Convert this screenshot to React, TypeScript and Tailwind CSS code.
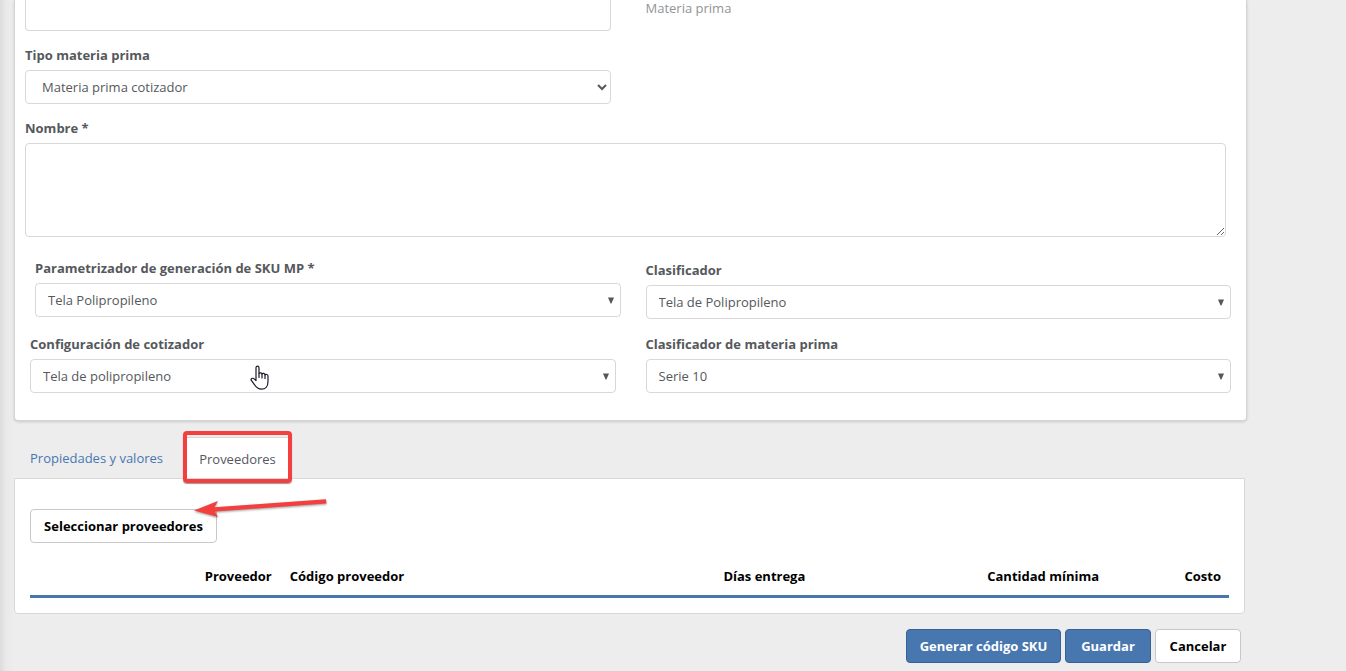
import type { ReactNode } from 'react'

const control =
  'block h-[34px] w-full rounded border border-[#d8d8d8] bg-white text-[13px] text-[#55585c]'

function Field({ id, label, children }: { id: string; label: string; children: ReactNode }) {
  return (
    <div>
      <label htmlFor={id} className="mb-[5px] block font-bold text-[#55585c]">
        {label}
      </label>
      {children}
    </div>
  )
}

function ComboField({ id, label, value }: { id: string; label: string; value: string }) {
  return (
    <Field id={id} label={label}>
      <div className="relative">
        <select id={id} className={`${control} appearance-none px-3`}>
          <option>{value}</option>
        </select>
        <svg
          className="pointer-events-none absolute top-3.5 right-[7px] h-[7px] w-[6px] fill-[#55585c]"
          viewBox="0 0 6 7"
        >
          <path d="M0 0.5H6L3.4 6.5H2.6Z" />
        </svg>
      </div>
    </Field>
  )
}

function HandCursor() {
  return (
    <svg
      className="pointer-events-none absolute top-[31px] left-[220px] h-[26px] w-[20px]"
      viewBox="0 0 20 26"
      fill="#fff"
      stroke="#1b1b28"
      strokeWidth="1.2"
      strokeLinejoin="round"
      strokeLinecap="round"
    >
      <path d="M6 15.5V3C6 1.9 6.6 1.2 7.5 1.2S9 1.9 9 3V8.6C9.4 7.6 12 7.7 12 9C12.6 7.9 15 8.2 15 9.8C15.8 9 18 9.3 18 11V16.5C18 21 15.6 24.2 11.5 24.2C8 24.2 6.3 22.6 4.6 19.8L1.2 15.2C0.5 13.8 2.4 12.7 3.8 13.6Z" />
      <path d="M9 8.5V12.5M12 9V13M15 9.8V13.4" fill="none" />
    </svg>
  )
}

function ProviderTable() {
  return (
    <table className="mt-[15px] w-full table-fixed border-b-[3px] border-[#4877b0] text-black">
      <thead>
        <tr className="h-[38px]">
          <th className="w-[21%] px-2.5 text-right">Proveedor</th>
          <th className="w-[24%] px-2 text-left">Código proveedor</th>
          <th className="w-[20%] px-1 text-right">Días entrega</th>
          <th className="w-[25%] px-2.5 text-right">Cantidad mínima</th>
          <th className="px-2 text-right">Costo</th>
        </tr>
      </thead>
    </table>
  )
}

export default function App() {
  return (
    <div className="min-h-screen overflow-hidden bg-[#ededed] bg-[linear-gradient(to_right,#dcdcdc,#e9e9e9_6px,#ededed_14px)] pr-[99px] pl-[14px] font-['Trebuchet_MS','Open_Sans',sans-serif] text-[13px] leading-5 text-[#55585c]">
      <section className="rounded-b border border-t-0 border-[#d4d4d4] bg-white pr-[15px] pb-[27px] pl-2.5 shadow-[0_1px_3px_rgba(0,0,0,0.15)]">
        <div className="grid grid-cols-2 gap-x-[35px]">
          <input
            aria-label="Código"
            className="h-[31px] w-full rounded-b border border-t-0 border-[#d8d8d8] bg-white px-3"
          />
          <p className="leading-4 text-[#929496]">Materia prima</p>
        </div>
        <div className="mt-3.5 grid grid-cols-2 gap-x-[35px]">
          <Field id="tipo" label="Tipo materia prima">
            <select id="tipo" className={`${control} pr-2.5 pl-3`}>
              <option>Materia prima cotizador</option>
            </select>
          </Field>
        </div>
        <div className="mt-3.5 mr-[5px]">
          <Field id="nombre" label="Nombre *">
            <textarea
              id="nombre"
              className="block h-[94px] w-full resize rounded border border-[#d8d8d8] bg-white px-3 py-1.5"
            />
          </Field>
        </div>
        <div className="mt-[21px] ml-2.5 grid grid-cols-2 gap-x-[25px]">
          <ComboField id="parametrizador" label="Parametrizador de generación de SKU MP *" value="Tela Polipropileno" />
          <div className="pt-0.5">
            <ComboField id="clasificador" label="Clasificador" value="Tela de Polipropileno" />
          </div>
        </div>
        <div className="mt-[15px] ml-[5px] grid grid-cols-2 gap-x-[30px]">
          <div className="relative">
            <ComboField id="configuracion" label="Configuración de cotizador" value="Tela de polipropileno" />
            <HandCursor />
          </div>
          <ComboField id="clasificador-mp" label="Clasificador de materia prima" value="Serie 10" />
        </div>
      </section>

      <main className="mr-0.5">
        <nav className="mt-4 flex h-[41px]">
          <button type="button" className="w-[170px] pl-4 text-left text-[#4877b0]">
            Propiedades y valores
          </button>
          <div className="relative">
            <button type="button" className="h-[42px] w-[107px] border border-b-0 border-[#d8d8d8] bg-white">
              Proveedores
            </button>
            <div className="pointer-events-none absolute -top-1.5 -left-px z-10 h-[52px] w-[109px] rounded border-4 border-[#f43f3f] shadow-[0_1px_1px_rgba(0,0,0,0.4)]" />
          </div>
        </nav>
        <section className="relative rounded-b border border-[#d8d8d8] bg-white px-[15px] pt-[30px] pb-[15px]">
          <button
            type="button"
            className="h-[34px] w-[187px] rounded border border-[#c8c8c8] bg-white font-bold text-black"
          >
            Seleccionar proveedores
          </button>
          <ProviderTable />
          <svg
            className="pointer-events-none absolute top-[17px] left-[177px] h-6 w-36 drop-shadow-[0_1px_1px_rgba(0,0,0,0.4)]"
            viewBox="0 0 144 24"
            fill="#f43f3f"
          >
            <path d="M2 14.5L26 5L22.5 11.3L134 3.2L134.4 7.6L22.8 15.6L26 21Z" />
          </svg>
        </section>
        <div className="mt-[15px] mr-1 flex justify-end gap-1 pb-2 font-bold">
          <button type="button" className="h-[34px] w-[155px] rounded border border-[#35609a] bg-[#4877b0] text-white">
            Generar código SKU
          </button>
          <button type="button" className="h-[34px] w-[86px] rounded border border-[#35609a] bg-[#4877b0] text-white">
            Guardar
          </button>
          <button type="button" className="h-[34px] w-[86px] rounded border border-[#c8c8c8] bg-white text-black">
            Cancelar
          </button>
        </div>
      </main>
    </div>
  )
}
